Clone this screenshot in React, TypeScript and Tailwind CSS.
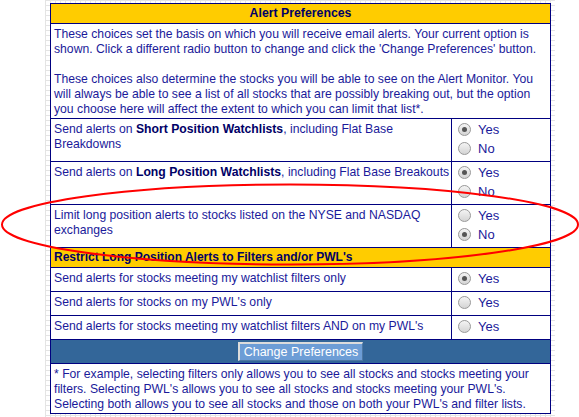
import React from 'react';

const font = 'font-["Liberation_Sans",Arial,sans-serif]';

function Radio({ checked, label }: { checked?: boolean; label: string }) {
  return (
    <div className="flex h-[19px] items-center">
      <span className="ml-[6px] mr-[7px] flex h-[13px] w-[13px] items-center justify-center rounded-full border border-[#9a9a9a] bg-[linear-gradient(to_bottom,#f4f4f4,#d4d4d4)]">
        {checked && <span className="h-[5px] w-[5px] rounded-full bg-[#555]" />}
      </span>
      <span className="text-[13px]">{label}</span>
    </div>
  );
}

const cell = 'border border-[#000080] align-top';

export default function App() {
  return (
    <div className={`relative h-[417px] w-[579px] overflow-hidden bg-white text-[12.2px] leading-[15px] text-[#1a1a9a] ${font}`}>
      <div className="ml-[45px] w-[510px] pl-[5px] pt-[3px] pb-[4px] bg-[linear-gradient(to_right,#e4e4e4_1px,transparent_1px),linear-gradient(to_bottom,#e4e4e4_1px,transparent_1px)] bg-[size:5px_5px]">
        <table className="w-[500px] table-fixed border-collapse bg-white">
          <colgroup>
            <col className="w-[401px]" />
            <col className="w-[99px]" />
          </colgroup>
          <tbody>
            <tr>
              <td colSpan={2} className={`${cell} bg-[#ffcc00] text-center text-[12.3px] font-bold leading-[19px] text-[#000066]`}>
                Alert Preferences
              </td>
            </tr>
            <tr>
              <td colSpan={2} className={`${cell} pl-[3px] pr-[2px] pt-[3px] pb-[1px]`}>
                These choices set the basis on which you will receive email alerts. Your current option is shown. Click a different radio button to change and click the 'Change Preferences' button.
                <br />
                <br />
                These choices also determine the stocks you will be able to see on the Alert Monitor. You will always be able to see a list of all stocks that are possibly breaking out, but the option you choose here will affect the extent to which you can limit that list*.
              </td>
            </tr>
            <tr>
              <td className={`${cell} pl-[3px] pt-[3px]`}>
                Send alerts on <b className="text-[#000066]">Short Position Watchlists</b>, including Flat Base Breakdowns
              </td>
              <td className={`${cell} pt-[1px] pb-[3px]`}>
                <Radio checked label="Yes" />
                <Radio label="No" />
              </td>
            </tr>
            <tr>
              <td className={`${cell} pl-[3px] pt-[3px]`}>
                Send alerts on <b className="text-[#000066]">Long Position Watchlists</b>, including Flat Base Breakouts
              </td>
              <td className={`${cell} pt-[1px] pb-[3px]`}>
                <Radio checked label="Yes" />
                <Radio label="No" />
              </td>
            </tr>
            <tr>
              <td className={`${cell} pl-[3px] pt-[3px]`}>
                Limit long position alerts to stocks listed on the NYSE and NASDAQ exchanges
              </td>
              <td className={`${cell} pt-[1px] pb-[3px]`}>
                <Radio label="Yes" />
                <Radio checked label="No" />
              </td>
            </tr>
            <tr>
              <td colSpan={2} className={`${cell} bg-[#ffcc00] px-[3px] text-[12px] font-bold leading-[19px] text-[#000066]`}>
                Restrict Long Position Alerts to Filters and/or PWL's
              </td>
            </tr>
            <tr>
              <td className={`${cell} pl-[3px] pt-[3px]`}>Send alerts for stocks meeting my watchlist filters only</td>
              <td className={`${cell} pt-[1px] pb-[3px]`}>
                <Radio checked label="Yes" />
              </td>
            </tr>
            <tr>
              <td className={`${cell} pl-[3px] pt-[3px]`}>Send alerts for stocks on my PWL's only</td>
              <td className={`${cell} pt-[1px] pb-[3px]`}>
                <Radio label="Yes" />
              </td>
            </tr>
            <tr>
              <td className={`${cell} pl-[3px] pt-[3px]`}>Send alerts for stocks meeting my watchlist filters AND on my PWL's</td>
              <td className={`${cell} pt-[1px] pb-[3px]`}>
                <Radio label="Yes" />
              </td>
            </tr>
            <tr>
              <td colSpan={2} className={`${cell} bg-[#336699] py-[2px] text-center`}>
                <button className="h-[19px] border-t-2 border-l-2 border-r border-b border-t-[#dcdcdc] border-l-[#dcdcdc] border-r-[#4d77a3] border-b-[#4d77a3] bg-[#6d9dd6] px-[4px] text-[12.5px] leading-[15px] text-white">
                  Change Preferences
                </button>
              </td>
            </tr>
            <tr>
              <td colSpan={2} className={`${cell} pl-[3px] pr-[2px] pt-[3px] pb-[1px]`}>
                * For example, selecting filters only allows you to see all stocks and stocks meeting your filters. Selecting PWL's allows you to see all stocks and stocks meeting your PWL's. Selecting both allows you to see all stocks and those on both your PWL's and filter lists.
              </td>
            </tr>
          </tbody>
        </table>
      </div>

      {/* red highlight drawn over the table */}
      <svg className="pointer-events-none absolute left-0 top-0" width="579" height="417">
        <ellipse cx="290" cy="224.5" rx="288" ry="40" fill="none" stroke="#ff0000" strokeWidth="2" />
      </svg>
    </div>
  );
}
